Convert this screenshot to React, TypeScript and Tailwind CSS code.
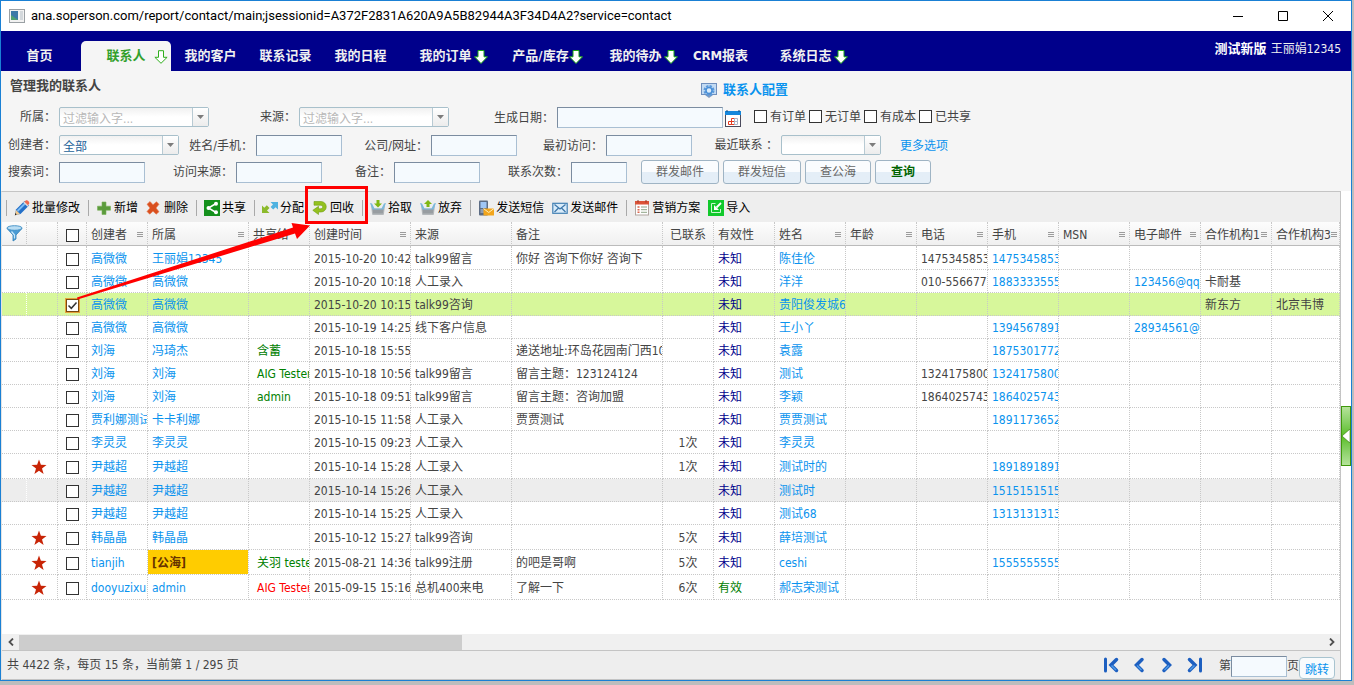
import { useState } from 'react';
import type { ReactNode } from 'react';

type Row = {
  star?: boolean;
  creator: string;
  owner: string;
  shared?: string;
  sharedRed?: boolean;
  time: string;
  source?: string;
  note?: string;
  count?: string;
  valid: string;
  name: string;
  tel?: string;
  mobile?: string;
  email?: string;
  org1?: string;
  org3?: string;
};

const rows: Row[] = [
  { creator: '高微微', owner: '王丽娟12345', time: '2015-10-20 10:42', source: 'talk99留言', note: '你好 咨询下你好 咨询下', valid: '未知', name: '陈佳伦', tel: '1475345853', mobile: '1475345853' },
  { creator: '高微微', owner: '高微微', time: '2015-10-20 10:18', source: '人工录入', valid: '未知', name: '洋洋', tel: '010-556677', mobile: '1883333555', email: '123456@qq', org1: '卡耐基' },
  { creator: '高微微', owner: '高微微', time: '2015-10-20 10:15', source: 'talk99咨询', valid: '未知', name: '贵阳俊发城6', org1: '新东方', org3: '北京韦博' },
  { creator: '高微微', owner: '高微微', time: '2015-10-19 14:25', source: '线下客户信息', valid: '未知', name: '王小丫', mobile: '1394567891', email: '28934561@' },
  { creator: '刘海', owner: '冯琦杰', shared: '含蓄', time: '2015-10-18 15:55', note: '递送地址:环岛花园南门西10', valid: '未知', name: '袁露', mobile: '1875301772' },
  { creator: '刘海', owner: '刘海', shared: 'AIG Tester', time: '2015-10-18 10:56', source: 'talk99留言', note: '留言主题：123124124', valid: '未知', name: '测试', tel: '1324175800', mobile: '1324175800' },
  { creator: '刘海', owner: '刘海', shared: 'admin', time: '2015-10-18 09:51', source: 'talk99留言', note: '留言主题：咨询加盟', valid: '未知', name: '李颖', tel: '1864025743', mobile: '1864025743' },
  { creator: '贾利娜测试', owner: '卡卡利娜', time: '2015-10-15 11:58', source: '人工录入', note: '贾贾测试', valid: '未知', name: '贾贾测试', mobile: '1891173652' },
  { creator: '李灵灵', owner: '李灵灵', time: '2015-10-15 09:23', source: '人工录入', count: '1次', valid: '未知', name: '李灵灵' },
  { star: true, creator: '尹越超', owner: '尹越超', time: '2015-10-14 15:28', source: '人工录入', count: '1次', valid: '未知', name: '测试时的', mobile: '1891891891' },
  { creator: '尹越超', owner: '尹越超', time: '2015-10-14 15:26', source: '人工录入', valid: '未知', name: '测试时', mobile: '1515151515' },
  { creator: '尹越超', owner: '尹越超', time: '2015-10-14 15:25', source: '人工录入', valid: '未知', name: '测试68', mobile: '1313131313' },
  { star: true, creator: '韩晶晶', owner: '韩晶晶', time: '2015-10-12 15:27', source: 'talk99咨询', count: '5次', valid: '未知', name: '薛培测试' },
  { star: true, creator: 'tianjih', owner: '[公海]', shared: '关羽 tester', time: '2015-08-21 14:36', source: 'talk99注册', note: '的吧是哥啊', count: '5次', valid: '未知', name: 'ceshi', mobile: '1555555555' },
  { star: true, creator: 'dooyuzixun', owner: 'admin', shared: 'AIG Tester', sharedRed: true, time: '2015-09-15 15:16', source: '总机400来电', note: '了解一下', count: '6次', valid: '有效', name: '郝志荣测试' },
];

const columns = [
  { title: '创建者', menu: true },
  { title: '所属', menu: true },
  { title: '共享给' },
  { title: '创建时间', menu: true },
  { title: '来源' },
  { title: '备注' },
  { title: '已联系', center: true },
  { title: '有效性' },
  { title: '姓名', menu: true },
  { title: '年龄', menu: true },
  { title: '电话', menu: true },
  { title: '手机', menu: true },
  { title: 'MSN', menu: true },
  { title: '电子邮件', menu: true },
  { title: '合作机构1', menu: true },
  { title: '合作机构3', menu: true },
];

const inputClass =
  'h-[21px] border border-[#a9bfd3] border-t-[#7b8ca0] border-l-[#7b8ca0] bg-[#f5fafe] px-1 text-xs outline-none';

const buttonClass =
  'h-6 rounded-[3px] border border-[#9fb4c4] bg-linear-to-b from-[#fafcfe] from-50% to-[#e4eef7] to-50% text-center text-xs leading-[22px]';

function DownArrow({ outline = false }: { outline?: boolean }) {
  return (
    <svg width="14" height="14" viewBox="0 0 14 14" aria-hidden="true">
      <path
        d={outline ? 'M4.500 .7h5v6.600h3.600L7 13.300.9 7.300h3.600z' : 'M4 .5h6v6.300h3.500L7 13.500.5 6.800H4z'}
        fill="#fff"
        stroke={outline ? '#2fae1c' : '#1ba312'}
        strokeWidth="1"
      />
    </svg>
  );
}

function Tab({ children, arrow }: { children: ReactNode; arrow?: boolean }) {
  return (
    <a href="#" className={`relative flex h-[30px] items-center justify-center ${arrow ? 'w-[95px]' : 'w-[75px]'}`}>
      {children}
      {arrow && (
        <span className="absolute top-[9px] right-[5px]">
          <DownArrow />
        </span>
      )}
    </a>
  );
}

function Field({ label, id, width, children }: { label: string; id: string; width: string; children: ReactNode }) {
  return (
    <div className="flex items-center">
      <label htmlFor={id} className={`shrink-0 pr-[3px] text-right whitespace-nowrap ${width}`}>
        {label}
      </label>
      {children}
    </div>
  );
}

function Combo({ id, value, className }: { id: string; value: string; className: string }) {
  return (
    <span className={`relative flex h-5 ${className}`}>
      <select
        id={id}
        className="h-5 w-full appearance-none rounded-[2px] border border-[#a8c0cb] bg-linear-to-b from-[#f1f1f1] to-white to-50% pt-[3px] pl-[3px] text-xs leading-4 outline-none"
      >
        <option>{value}</option>
      </select>
      <span className="pointer-events-none absolute top-px right-px flex h-[18px] w-4 items-center justify-center border-l border-[#b8cad3] bg-linear-to-b from-white to-[#ececec]">
        <svg width="7" height="4" viewBox="0 0 7 4" aria-hidden="true">
          <path d="M0 0h7L3.500 4z" fill="#7c7c7c" />
        </svg>
      </span>
    </span>
  );
}

function Check({ label, checked, onChange }: { label: string; checked: boolean; onChange: () => void }) {
  return (
    <span className="relative inline-flex size-[13px] align-middle">
      <input
        type="checkbox"
        aria-label={label}
        checked={checked}
        onChange={onChange}
        className="size-[13px] appearance-none border border-[#333] bg-white checked:border-[#7a4a10] checked:ring-1 checked:ring-[#e6a23c]"
      />
      {checked && (
        <svg className="pointer-events-none absolute inset-0" width="13" height="13" viewBox="0 0 13 13" aria-hidden="true">
          <path d="M2.500 6.500l2.800 2.800L10.500 3.500" fill="none" stroke="#333" strokeWidth="1.500" />
        </svg>
      )}
    </span>
  );
}

function Tool({ icon, children }: { icon: ReactNode; children: ReactNode }) {
  return (
    <button type="button" className="flex items-center gap-0.5 px-1 whitespace-nowrap text-black">
      <svg width="16" height="16" viewBox="0 0 16 16" aria-hidden="true">
        {icon}
      </svg>
      {children}
    </button>
  );
}

function Separator() {
  return (
    <span className="flex w-2 justify-center">
      <span className="h-4 w-px bg-[#a9a9a9]" />
    </span>
  );
}

const basket = (
  <>
    <path d="M1 5l1 8.500c0 1 .5 1.500 1.500 1.500h9c1 0 1.500-.5 1.500-1.500L15 5l-3 3.500H4z" fill="#b4b8bb" />
    <path d="M2.500 9h11l-.6 4.500H3.100z" fill="#989da1" />
    <path d="M0 3l2 .5 2.500 5h7L14 3.500l2-.5-2.500 6.500h-11z" fill="#7cb9dc" />
  </>
);

function Toolbar() {
  return (
    <div className="flex h-[30px] items-center bg-[#eee] pt-0.5">
      <Separator />
      <Tool
        icon={
          <>
            <path d="M1 15l1-5.500 8.500-8.500 4.500 4.500L6.500 14z" fill="#2470c8" />
            <path d="M3.500 11l8-8" stroke="#7dbdf5" strokeWidth="1.800" />
            <path d="M10 2l1.500-1.300c1-.8 2-.5 2.800.3s1.500 2 .7 2.900L13.500 5.500z" fill="#ef6a50" />
            <path d="M9.200 2.500l4.300 4.300 1-1-4.300-4.300z" fill="#dcdcdc" />
            <path d="M2 10l4 4-5 1.300z" fill="#f2c98f" />
            <path d="M1.400 13l1.300 1.500-1.900.9z" fill="#222" />
          </>
        }
      >
        批量修改
      </Tool>
      <Separator />
      <Tool icon={<path d="M6 2h4v4.200h4.500v4H10V14.500H6v-4.300H1.500v-4H6z" fill="#5b9b3c" stroke="#78b058" strokeWidth=".6" />}>新增</Tool>
      <Tool icon={<path d="M4 1.500l3 3.200 3.500-3L13 4.300 10 8l3 3.700-2.800 2.500L7 11.200l-3.300 3L1 11.500 4 8 1 4.300z" fill="#d9501f" stroke="#e8794e" strokeWidth=".6" />}>删除</Tool>
      <Separator />
      <Tool
        icon={
          <>
            <rect width="16" height="16" fill="#14901c" />
            <path d="M12 3.500L4.500 8l7.500 4.500" fill="none" stroke="#fff" strokeWidth="1.500" />
            <circle cx="4.500" cy="8" r="2" fill="#fff" />
            <circle cx="12" cy="3.800" r="2" fill="#fff" />
            <circle cx="12" cy="12.200" r="2" fill="#fff" />
          </>
        }
      >
        共享
      </Tool>
      <Separator />
      <Tool
        icon={
          <>
            <path d="M8.500 2H16v7.500l-2.400-2.200-2.400 2.200-2.600-2.600 2.400-2.500z" fill="#4fb2e0" />
            <path d="M0 5.500l2.300 2.200 2.500-2.400 2.700 2.600L5 10.500l2.500 2.500H0z" fill="#8cba2c" />
          </>
        }
      >
        分配
      </Tool>
      <Tool
        icon={
          <path
            d="M2 1.500h7a5 5 0 010 10.500H6.500v2.500L.8 10.300l5.700-4v2.500H9a1.600 1.600 0 000-3.600H2z"
            fill="#94c11f"
            stroke="#6f9d10"
            strokeWidth=".6"
          />
        }
      >
        回收
      </Tool>
      <Separator />
      <Tool
        icon={
          <>
            {basket}
            <path d="M6.500 0h3v3.500H12L8 7.500l-4-4h2.500z" fill="#7fb813" />
          </>
        }
      >
        拾取
      </Tool>
      <Tool
        icon={
          <>
            {basket}
            <path d="M6.500 7h3V4H12L8 0 4 4h2.500z" fill="#7fb813" />
          </>
        }
      >
        放弃
      </Tool>
      <Separator />
      <Tool
        icon={
          <>
            <rect x="1" y=".5" width="9" height="15" rx="1" fill="#5c6c84" />
            <rect x="2.500" y="2" width="6" height="6" fill="#9fc6f5" />
            <path d="M2.500 10h6M2.500 12h6" stroke="#c6cfdb" />
            <rect x="5.500" y="8.500" width="10.500" height="7" fill="#f2a51c" />
            <path d="M5.500 8.500l5.200 4 5.300-4" fill="none" stroke="#fff0b8" />
          </>
        }
      >
        发送短信
      </Tool>
      <Tool
        icon={
          <>
            <rect x=".8" y="3.300" width="14.400" height="10" fill="#d9ecfa" stroke="#4380b3" strokeWidth="1.200" />
            <path d="M2.500 4.500L8 9l5.500-4.500M2.500 12l4-4M13.500 12l-4-4" fill="none" stroke="#3e78ab" strokeWidth="1.300" />
          </>
        }
      >
        发送邮件
      </Tool>
      <Separator />
      <Tool
        icon={
          <>
            <rect x="1.500" y="1.500" width="13" height="13.500" fill="#fff" stroke="#b0a6a0" />
            <rect x="1" y="1" width="14" height="3.500" fill="#db5338" />
            <path d="M4 0v2.500M12 0v2.500" stroke="#9b3422" />
            <path d="M3.500 7h2M3.500 9.700h2M3.500 12.300h2" stroke="#d9644c" strokeWidth="1.400" />
            <path d="M7 7h6M7 9.700h6M7 12.300h6" stroke="#8ea486" />
          </>
        }
      >
        营销方案
      </Tool>
      <Tool
        icon={
          <>
            <rect width="16" height="16" fill="#11c92b" />
            <path d="M7.500 3.500h-4v9h9V9" fill="none" stroke="#c9f7cf" strokeWidth="1" />
            <path d="M13 3L8.500 7.500" stroke="#fff" strokeWidth="1.800" />
            <path d="M6 5v5h5z" fill="#fff" />
          </>
        }
      >
        导入
      </Tool>
    </div>
  );
}

function Cell({ children, className = 'text-[#444]' }: { children?: ReactNode; className?: string }) {
  return (
    <td className={`overflow-hidden border-r border-b border-dotted border-[#c8c8c8] pt-0.5 pl-1 leading-5 whitespace-nowrap ${className}`}>
      {children}
    </td>
  );
}

function ContactTable() {
  const [selected, setSelected] = useState<number[]>([2]);
  const toggle = (i: number) =>
    setSelected(selected.includes(i) ? selected.filter((n) => n !== i) : [...selected, i]);
  const link = 'text-[#0a93ee]';

  return (
    <table className="w-full table-fixed border-separate border-spacing-0 text-left">
      <colgroup>
        <col className="w-[25px]" />
        <col className="w-[31px]" />
        <col className="w-[29px]" />
        <col className="w-[61px]" />
        <col className="w-[101px]" />
        <col className="w-[61px]" />
        <col className="w-[101px]" />
        <col className="w-[101px]" />
        <col className="w-[151px]" />
        <col className="w-[51px]" />
        <col className="w-[61px]" />
        <col className="w-[71px]" />
        <col className="w-[71px]" />
        <col className="w-[71px]" />
        <col className="w-[71px]" />
        <col className="w-[71px]" />
        <col className="w-[71px]" />
        <col className="w-[71px]" />
        <col />
      </colgroup>
      <thead>
        <tr className="h-6 bg-linear-to-b from-[#fdfdfd] to-[#efefef]">
          <th className="border-r border-b border-dotted border-[#c8c8c8] border-b-[#bbb] [border-bottom-style:solid]">
            <svg className="ml-1 block" width="17" height="17" viewBox="0 0 17 17" aria-hidden="true">
              <path d="M1 3.500l6 6.500v6l3-2v-4l6-6.500z" fill="#4a9bd4" stroke="#2f7fb8" strokeWidth=".8" />
              <ellipse cx="8.500" cy="3" rx="7.500" ry="2.300" fill="#b9ddf3" stroke="#3b8cc4" strokeWidth=".9" />
              <path d="M5.500 6.500l3 3.500v3.500" fill="none" stroke="#c9e8fa" strokeWidth="1.300" />
            </svg>
          </th>
          <th className="border-r border-b border-dotted border-[#c8c8c8] border-b-[#bbb] [border-bottom-style:solid]" />
          <th className="border-r border-b border-dotted border-[#c8c8c8] border-b-[#bbb] pt-0.5 text-center leading-5 [border-bottom-style:solid]">
            <Check
              label="全选"
              checked={selected.length === rows.length}
              onChange={() => setSelected(selected.length === rows.length ? [] : rows.map((_, i) => i))}
            />
          </th>
          {columns.map((c) => (
            <th
              key={c.title}
              className="overflow-hidden border-r border-b border-dotted border-[#c8c8c8] border-b-[#bbb] p-0 font-normal whitespace-nowrap [border-bottom-style:solid]"
            >
              <div className={`flex items-center pt-[3px] pr-1 pl-1 leading-5 ${c.center ? 'justify-center' : 'justify-between'}`}>
                {c.title}
                {c.menu && (
                  <svg width="6" height="6" viewBox="0 0 6 6" aria-hidden="true" className="shrink-0">
                    <path d="M0 .5h6M0 2.500h6M0 4.500h6" stroke="#9c9c9c" />
                  </svg>
                )}
              </div>
            </th>
          ))}
        </tr>
      </thead>
      <tbody className="[&>tr:first-child]:h-6">
        {rows.map((r, i) => (
          <tr
            key={i}
            className={`${r.star ? 'h-[25px]' : 'h-[23px]'} ${selected.includes(i) ? 'bg-[#d7f79b]' : i === 10 ? 'bg-[#ededed]' : 'bg-white'}`}
          >
            <td className="border-r border-b border-dotted border-[#c8c8c8] border-r-white" />
            <Cell>
              {r.star && (
                <svg className="block" width="16" height="16" viewBox="0 0 16 16" aria-label="星标">
                  <path d="M8 .5l1.900 5.300 5.600.1-4.500 3.500 1.600 5.500L8 11.700l-4.600 3.200L5 9.400.5 5.900l5.600-.1z" fill="#c82406" />
                </svg>
              )}
            </Cell>
            <td className="border-r border-b border-dotted border-[#c8c8c8] pt-0.5 text-center leading-5">
              <Check label={r.name} checked={selected.includes(i)} onChange={() => toggle(i)} />
            </td>
            <Cell className={link}>{r.creator}</Cell>
            {r.owner === '[公海]' ? (
              <Cell className="bg-[#fc0] bg-clip-padding font-bold text-[#630]">{r.owner}</Cell>
            ) : (
              <Cell className={link}>{r.owner}</Cell>
            )}
            <Cell className={r.sharedRed ? 'text-[#f00]' : 'text-[#008000]'}>
              {r.shared && <span className="pl-1">{r.shared}</span>}
            </Cell>
            <Cell>{r.time}</Cell>
            <Cell>{r.source}</Cell>
            <Cell>{r.note}</Cell>
            <Cell className="pr-1 text-center text-[#444]">{r.count}</Cell>
            <Cell className={r.valid === '有效' ? 'text-[#008000]' : 'text-[#00008b]'}>{r.valid}</Cell>
            <Cell className={link}>
              <a href="#">{r.name}</a>
            </Cell>
            <Cell />
            <Cell>{r.tel}</Cell>
            <Cell className={link}>{r.mobile}</Cell>
            <Cell />
            <Cell className={link}>{r.email}</Cell>
            <Cell>{r.org1}</Cell>
            <Cell>{r.org3}</Cell>
          </tr>
        ))}
      </tbody>
    </table>
  );
}

function PagerButton({ label, bar, flip }: { label: string; bar?: boolean; flip?: boolean }) {
  return (
    <button type="button" aria-label={label}>
      <svg width="16" height="16" viewBox="0 0 16 16" className={flip ? '-scale-x-100' : ''} aria-hidden="true">
        {bar && <path d="M2.500 2v12" stroke="#1d5fc0" strokeWidth="3" strokeLinecap="round" />}
        <path
          d={bar ? 'M13.500 2.500L8 8l5.500 5.500' : 'M11 2.500L5.500 8l5.500 5.500'}
          fill="none"
          stroke="#1d5fc0"
          strokeWidth="3.500"
          strokeLinecap="round"
        />
        <path d={bar ? 'M8.500 8.500l4.500 4.500' : 'M6 8.500l4.500 4.500'} stroke="#4f9ce8" strokeWidth="1.500" />
      </svg>
    </button>
  );
}

function SearchForm() {
  return (
    <form className="bg-[#f5f5f5] pb-2 text-[#444]">
      <div className="flex h-9 items-start">
        <h1 className="w-[700px] pt-[5px] pl-[9px] text-[13px] leading-5 font-bold">管理我的联系人</h1>
        <a href="#" className="flex items-center gap-1.5 pt-[9px] text-[13px] leading-5 font-bold text-[#0a93ee]">
          <svg width="16" height="15" viewBox="0 0 16 15" aria-hidden="true">
            <rect x=".5" y=".5" width="15" height="11" fill="#c3dbf3" stroke="#6f8fbd" />
            <path d="M4 12h8l-4 3z" fill="#7d9ac2" />
            <circle cx="8" cy="7.500" r="4.200" fill="none" stroke="#5c9bdc" strokeWidth="2.600" strokeDasharray="2.200 1.100" />
            <circle cx="8" cy="7.500" r="3" fill="#dcecfa" stroke="#4a8fd6" strokeWidth="1.500" />
          </svg>
          联系人配置
        </a>
      </div>

      <div className="flex h-7 items-start">
        <Field label="所属：" id="owner" width="w-[58px]">
          <Combo id="owner" value="过滤输入字..." className="w-[150px] text-[#b8b8b8]" />
        </Field>
        <Field label="来源：" id="source" width="w-[90px]">
          <Combo id="source" value="过滤输入字..." className="w-[150px] text-[#b8b8b8]" />
        </Field>
        <Field label="生成日期：" id="date" width="w-[108px]">
          <input id="date" type="text" className={`w-[166px] ${inputClass}`} />
        </Field>
        <button type="button" aria-label="选择日期" className="mt-[3px] mr-[13px] ml-0.5">
          <svg width="16" height="17" viewBox="0 0 16 17" aria-hidden="true">
            <rect x=".5" y="1.500" width="15" height="15" fill="#fff" stroke="#4a4a5c" />
            <rect y="1" width="16" height="4" fill="#1587dc" />
            <path d="M2 0v2M14 0v2" stroke="#134a80" />
            <path d="M3.500 11.500h3v3h-3zM6.500 11.500h3v3h-3zM6.500 8.500h3v3h-3z" fill="none" stroke="#e33a20" />
            <path d="M9.500 8.500h3v3h-3zM9.500 11.500h3v3h-3z" fill="none" stroke="#aab4c8" />
          </svg>
        </button>
        {['有订单', '无订单', '有成本', '已共享'].map((t) => (
          <label key={t} className="flex h-[19px] w-[55px] items-center gap-[3px] whitespace-nowrap">
            <input type="checkbox" className="size-[13px] shrink-0 appearance-none border border-[#333] bg-white" />
            {t}
          </label>
        ))}
      </div>

      <div className="flex h-[26px] items-start">
        <Field label="创建者：" id="creator" width="w-[58px]">
          <Combo id="creator" value="全部" className="w-[120px] text-[#236299]" />
        </Field>
        <Field label="姓名/手机：" id="name" width="w-[77px]">
          <input id="name" type="text" className={`w-[86px] ${inputClass}`} />
        </Field>
        <Field label="公司/网址：" id="company" width="w-[89px]">
          <input id="company" type="text" className={`w-[86px] ${inputClass}`} />
        </Field>
        <Field label="最初访问：" id="first" width="w-[89px]">
          <input id="first" type="text" className={`w-[86px] ${inputClass}`} />
        </Field>
        <Field label="最近联系 ：" id="recent" width="w-[89px]">
          <Combo id="recent" value="" className="w-[100px]" />
        </Field>
        <a href="#" className="ml-[19px] leading-[22px] text-[#0a93ee]">
          更多选项
        </a>
      </div>

      <div className="flex h-[22px] items-center">
        <Field label="搜索词：" id="keyword" width="w-[58px]">
          <input id="keyword" type="text" className={`w-[86px] ${inputClass}`} />
        </Field>
        <Field label="访问来源：" id="referer" width="w-[91px]">
          <input id="referer" type="text" className={`w-[86px] ${inputClass}`} />
        </Field>
        <Field label="备注：" id="note" width="w-[72px]">
          <input id="note" type="text" className={`w-[86px] ${inputClass}`} />
        </Field>
        <Field label="联系次数：" id="times" width="w-[91px]">
          <input id="times" type="text" className={`w-[56px] ${inputClass}`} />
        </Field>
        <div className="ml-3.5 flex gap-1 text-[#666]">
          <button type="button" className={`w-[78px] ${buttonClass}`}>群发邮件</button>
          <button type="button" className={`w-[78px] ${buttonClass}`}>群发短信</button>
          <button type="button" className={`w-[66px] ${buttonClass}`}>查公海</button>
          <button type="button" className={`w-[56px] font-bold text-[#006400] ${buttonClass}`}>查询</button>
        </div>
      </div>
    </form>
  );
}

export default function App() {
  return (
    <div className="flex min-h-screen flex-col bg-[#bdbdbd] pr-0.5 pb-1 font-['DejaVu_Sans_Condensed','Noto_Sans_CJK_SC',sans-serif] text-xs text-[#444]">
      <div className="flex flex-1 flex-col border border-[#1a80d4] bg-white">
        <header>
          <div className="flex h-[30px] items-center pl-2 text-black">
            <svg width="16" height="14" viewBox="0 0 16 14" aria-hidden="true">
              <rect x=".5" y=".5" width="15" height="13" fill="#f2f2f2" stroke="#9aa0a4" />
              <rect x="2" y="2" width="7" height="9" fill="#3b78a8" />
              <path d="M2 11V6l7 5z" fill="#4fa070" />
              <rect x="11" y="2" width="3" height="9" fill="#d3d8dc" />
            </svg>
            <span className="flex-1 pl-1.5 font-[Roboto,sans-serif] text-[13px]">
              ana.soperson.com/report/contact/main;jsessionid=A372F2831A620A9A5B82944A3F34D4A2?service=contact
            </span>
            <button type="button" aria-label="最小化" className="flex w-[45px] justify-center">
              <svg width="10" height="10" viewBox="0 0 10 10"><path d="M0 5.500h10" stroke="#000" /></svg>
            </button>
            <button type="button" aria-label="最大化" className="flex w-[45px] justify-center">
              <svg width="10" height="10" viewBox="0 0 10 10"><path d="M.5 .5h9v9h-9z" fill="none" stroke="#000" /></svg>
            </button>
            <button type="button" aria-label="关闭" className="flex w-[46px] justify-center">
              <svg width="10" height="10" viewBox="0 0 10 10"><path d="M0 0l10 10M10 0L0 10" stroke="#000" /></svg>
            </button>
          </div>

          <nav className="flex h-10 items-end bg-[#00008b] pl-px text-[13px] font-bold text-[#f0f0f0]">
            <Tab>首页</Tab>
            <a
              href="#"
              className="relative mr-0.5 ml-1 flex h-[30px] w-[90px] items-center justify-center rounded-t-[5px] bg-[#f5f5f5] text-[#33a02c]"
            >
              联系人
              <span className="absolute top-[9px] right-[3px]">
                <DownArrow outline />
              </span>
            </a>
            <Tab>我的客户</Tab>
            <Tab>联系记录</Tab>
            <Tab>我的日程</Tab>
            <Tab arrow>我的订单</Tab>
            <Tab arrow>产品/库存</Tab>
            <Tab arrow>我的待办</Tab>
            <Tab>CRM报表</Tab>
            <Tab arrow>系统日志</Tab>
            <div className="ml-auto self-start pt-2 pr-2.5 leading-5">
              <span className="text-white">测试新版</span> <span className="text-xs font-normal">王丽娟12345</span>
            </div>
          </nav>
        </header>

        <SearchForm />

        <main className="relative flex flex-1 flex-col pr-2.5">
          <div className="flex flex-1 flex-col border-t border-r border-l border-[#c4c4c4] border-l-[#e4e4e4]">
            <Toolbar />
            <div className="flex-1">
              <ContactTable />
            </div>
            <div className="flex h-4 items-center bg-[#f0f0f0]">
              <button type="button" aria-label="向左滚动" className="flex w-[17px] justify-center">
                <svg width="6" height="8" viewBox="0 0 6 8"><path d="M5 .5L1.500 4 5 7.500" fill="none" stroke="#505050" strokeWidth="1.800" /></svg>
              </button>
              <div className="flex h-[15px] flex-1">
                <div className="w-[34%] bg-[#cdcdcd]" />
              </div>
              <button type="button" aria-label="向右滚动" className="flex w-[17px] justify-center">
                <svg width="6" height="8" viewBox="0 0 6 8"><path d="M1 .5L4.500 4 1 7.500" fill="none" stroke="#505050" strokeWidth="1.800" /></svg>
              </button>
            </div>
            <footer className="flex h-[30px] items-center border-t border-b border-[#c4c4c4] bg-[#eee] pl-[5px]">
              <span>共 4422 条，每页 15 条，当前第 1 / 295 页</span>
              <div className="ml-auto flex items-center gap-3 pr-4">
                <PagerButton label="首页" bar />
                <PagerButton label="上一页" />
                <PagerButton label="下一页" flip />
                <PagerButton label="末页" bar flip />
              </div>
              <label className="flex items-center pt-0.5">
                第
                <input type="text" className={`w-14 ${inputClass}`} />
                页
              </label>
              <button
                type="button"
                className="mr-[5px] h-[22px] w-9 self-end rounded-[4px] border border-[#a8c4d0] bg-[#f8fbfd] pt-1 text-xs leading-4 text-[#0a93ee]"
              >
                跳转
              </button>
            </footer>
          </div>

          <button
            type="button"
            aria-label="展开侧栏"
            className="absolute top-[215px] right-0 flex h-[60px] w-2.5 items-center justify-center border border-[#3f980c] bg-linear-to-b from-[#b5e39a] via-[#58bd1c] to-[#b5e39a]"
          >
            <svg width="8" height="14" viewBox="0 0 8 14"><path d="M8 0v14L0 7z" fill="#fff" stroke="#2f7a0a" strokeWidth=".6" /></svg>
          </button>

          <div className="pointer-events-none absolute -top-[5px] left-[304px] h-[38px] w-[63px] border-[3px] border-[#f00]" />
          <svg className="pointer-events-none absolute top-[31px] left-[76px]" width="234" height="78" viewBox="0 0 234 78" aria-hidden="true">
            <path d="M0 75.500L216 5.500 214.500 1 233 3.500 220 17l-2-5.500L.5 77.500z" fill="#f00" />
          </svg>
        </main>
      </div>
    </div>
  );
}
